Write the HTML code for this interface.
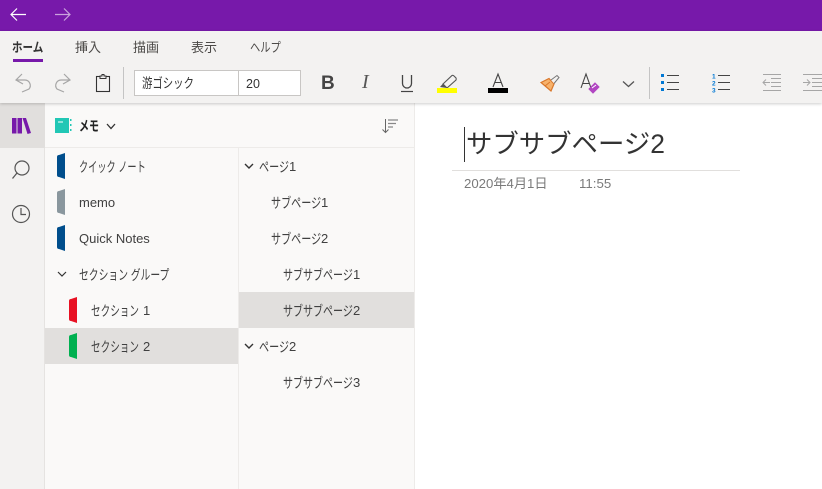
<!DOCTYPE html>
<html><head><meta charset="utf-8">
<style>
*{box-sizing:border-box}
html,body{margin:0;padding:0;width:822px;height:489px;overflow:hidden;background:#fff}
body{position:relative;font-family:"Liberation Sans","Noto Sans CJK JP",sans-serif;color:#262626}
.a{position:absolute;white-space:nowrap;transform-origin:left center}
.m{color:#404040;font-size:14px;line-height:18px;margin-top:1px}
.d{color:#404040;font-size:13px;line-height:18px}
svg{position:absolute;overflow:visible}
.tab{position:absolute;top:39px;font-size:13px;line-height:18px;color:#4c4a48;white-space:nowrap;transform-origin:left center}
</style></head><body>
<div class="a" style="left:0;top:0;width:822px;height:31px;background:#7719aa"></div>
<svg style="left:0;top:0" width="80" height="31" fill="none" stroke-width="1.2"><path d="M11 14.5H26M17 8.500L11 14.500L17 20.500" stroke="#fff"/><path d="M55 14.5H70M64 8.500L70 14.500L64 20.500" stroke="#c9a3dd"/></svg>
<div class="a" style="left:0;top:31px;width:822px;height:72px;background:#f3f2f1;box-shadow:0 1px 3px rgba(0,0,0,.2);z-index:3"></div>
<div style="position:absolute;left:0;top:0;width:822px;height:110px;z-index:4">
<div class="tab" style="left:12px;font-weight:bold;color:#333;transform:scaleX(.81)">ホーム</div>
<div class="a" style="left:13px;top:59px;width:30px;height:3px;background:#7719aa"></div>
<div class="tab" style="left:75px">挿入</div>
<div class="tab" style="left:133px">描画</div>
<div class="tab" style="left:191px">表示</div>
<div class="tab" style="left:250px;transform:scaleX(.79)">ヘルプ</div>
<svg style="left:0;top:0" width="822" height="110" fill="none">
<path d="M22 74L16 80L23 84M16 80H25A5.500 5.500 0 0 1 29 89L22 92" stroke="#a6a6a6" stroke-width="1.200"/>
<path d="M64 74L70 80L63 84M70 80H61A5.500 5.500 0 0 0 57 89L64 92" stroke="#a6a6a6" stroke-width="1.200"/>
<rect x="96.500" y="76.500" width="13" height="15" stroke="#333" stroke-width="1.100"/>
<path d="M100 78.500V76H102V74.500H104V76H106V78.500Z" fill="#f3f2f1" stroke="#333"/>
<path d="M123.500 67V99" stroke="#c4c4c4"/>
<path d="M401 91.500H413" stroke="#444" stroke-width="1.200"/>
<path d="M402.500 75V83.500A4.500 4.500 0 0 0 411.500 83.500V75" stroke="#444" stroke-width="1.300"/>
<path d="M443 84L452 75.500Q453 75 454 76L456 78Q456.500 79 456 80L447 88Z" fill="#f3f2f1" stroke="#555" stroke-width="1.100"/>
<path d="M440 87L443 83.500L447 88Z" fill="#555"/>
<rect x="437" y="88" width="20" height="5" fill="#ff0"/>
<rect x="488" y="88" width="20" height="5" fill="#000"/>
<path d="M493 87L498 74L503 87M494.500 82.500H501.500" stroke="#444" stroke-width="1.100"/>
<path d="M541 82.500L549 78.500L554 84L551 91Z" fill="#f7b26b" stroke="#d9772b" stroke-width="1.200"/>
<path d="M545 86L550 82" stroke="#d9772b"/>
<path d="M551 80L557 75.500L559 77.500L554 83.500" fill="#f3f2f1" stroke="#777"/>
<path d="M581 88L586 74L591 88M582.500 83.500H589.500" stroke="#444" stroke-width="1.100"/>
<path d="M589 89L595 83L599 87L593 93Z" fill="#b146c2" stroke="#b146c2"/>
<path d="M592 88L596 85" stroke="#fff"/>
<path d="M623 81.500L628.500 86.500L634 81.500" stroke="#555" stroke-width="1.300"/>
<path d="M649.500 67V99" stroke="#c4c4c4"/>
<path d="M661 75.500H664M661 82.500H664M661 89.500H664" stroke="#0078d4" stroke-width="3"/>
<path d="M667 75.500H679M667 82.500H679M667 89.500H679" stroke="#444"/>
<text x="712" y="78.500" font-size="6.500" font-weight="bold" fill="#0078d4">1</text>
<text x="712" y="85.500" font-size="6.500" font-weight="bold" fill="#0078d4">2</text>
<text x="712" y="92.500" font-size="6.500" font-weight="bold" fill="#0078d4">3</text>
<path d="M718 75.500H730M718 82.500H730M718 89.500H730" stroke="#444"/>
<path d="M763 74.500H781M771 78.500H781M771 82.500H781M771 86.500H781M763 90.500H781" stroke="#a6a6a6"/>
<path d="M763 82.500H770M766 79.500L763 82.500L766 85.500" stroke="#a6a6a6"/>
<path d="M803 74.500H822M812 78.500H822M812 82.500H822M812 86.500H822M803 90.500H822" stroke="#a6a6a6"/>
<path d="M803 82.500H810M807 79.500L810 82.500L807 85.500" stroke="#a6a6a6"/>
</svg>
<div class="a" style="left:134px;top:70px;width:167px;height:26px;background:#fff;border:1px solid #c8c6c4"></div>
<div class="a" style="left:238px;top:70px;width:1px;height:26px;background:#c8c6c4"></div>
<div class="a" style="left:142px;top:75px;font-size:13.500px;line-height:18px;color:#333;transform:scaleX(.77)">游ゴシック</div>
<div class="a" style="left:246px;top:75px;font-size:12.500px;line-height:18px;color:#333">20</div>
<div class="a" style="left:321px;top:72px;font-size:19px;line-height:23px;font-weight:bold;color:#444">B</div>
<div class="a" style="left:362px;top:71px;font-size:20px;line-height:23px;font-style:italic;font-family:'Liberation Serif',serif;color:#555">I</div>
</div>
<div class="a" style="left:0;top:103px;width:45px;height:386px;background:#f3f2f1;border-right:1px solid #e5e3e1"></div>
<div class="a" style="left:0;top:103px;width:45px;height:45px;background:#e1dfdd"></div>
<div class="a" style="left:45px;top:103px;width:370px;height:386px;background:#faf9f8;border-right:1px solid #edebe9"></div>
<div class="a" style="left:45px;top:147px;width:369px;height:1px;background:#edebe9"></div>
<div class="a" style="left:238px;top:148px;width:1px;height:341px;background:#edebe9"></div>
<div class="a" style="left:45px;top:328px;width:193px;height:36px;background:#e1dfdd"></div>
<div class="a" style="left:239px;top:292px;width:175px;height:36px;background:#e1dfdd"></div>
<svg style="left:0;top:100px" width="420" height="290" fill="none">
<path d="M12 18H16.500V33.500H12ZM17.500 18H22V33.500H17.500Z" fill="#7719aa"/><path d="M22.500 18H26L31 33L27.500 34Z" fill="#7719aa"/>
<circle cx="22" cy="68" r="7" stroke="#555" stroke-width="1.200"/><path d="M17 73L12.500 78.500" stroke="#555" stroke-width="1.300"/>
<circle cx="21" cy="114" r="8.500" stroke="#555" stroke-width="1.200"/><path d="M21 108V114.500H26" stroke="#555" stroke-width="1.200"/>
<path d="M55 18H69V33H55Z" fill="#22c7b5"/><path d="M58 22H63" stroke="#fff"/><path d="M70 20H71.500M70 25H71.500M70 30H71.500" stroke="#22c7b5" stroke-width="2"/>
<path d="M107 24L111 28.500L115 24" stroke="#333" stroke-width="1.300"/>
<path d="M385.500 19V32.500M382.500 29.500L385.500 32.500L388.500 29.500" stroke="#666"/><path d="M388 20H398M388 23.500H396M388 27H393" stroke="#888" stroke-width="1.200"/>
<path d="M65 53V79L59 77Q57 77 57 75V57Q57 55 59 55Z" fill="#004e8c"/>
<path d="M65 89V115L59 113Q57 113 57 111V93Q57 91 59 91Z" fill="#8a979e"/>
<path d="M65 125V151L59 149Q57 149 57 147V129Q57 127 59 127Z" fill="#004e8c"/>
<path d="M77 197V223L71 221Q69 221 69 219V201Q69 199 71 199Z" fill="#e81123"/>
<path d="M77 233V259L71 257Q69 257 69 255V237Q69 235 71 235Z" fill="#00b050"/>
<path d="M58 172L62 176L66 172" stroke="#333" stroke-width="1.200"/>
<path d="M245 64L249 68L253 64M245 244L249 248L253 244" stroke="#333" stroke-width="1.400"/>
</svg>
<div class="a" style="left:79px;top:117px;font-size:14px;line-height:18px;font-weight:bold;color:#222;transform:scaleX(.715)">メモ</div>
<div class="a m" style="left:79px;top:157px;transform:scaleX(.655)">クイック ノート</div>
<div class="a d" style="left:79px;top:194px">memo</div>
<div class="a d" style="left:79px;top:230px">Quick Notes</div>
<div class="a m" style="left:79px;top:265px;transform:scaleX(.7)">セクション グループ</div>
<div class="a m" style="left:91px;top:301px;transform:scaleX(.686)">セクション</div><div class="a d" style="left:143px;top:302px">1</div>
<div class="a m" style="left:91px;top:337px;transform:scaleX(.686)">セクション</div><div class="a d" style="left:143px;top:338px">2</div>
<div class="a m" style="left:259px;top:157px;transform:scaleX(.72)">ページ</div><div class="a d" style="left:289px;top:158px">1</div>
<div class="a m" style="left:271px;top:193px;transform:scaleX(.72)">サブページ</div><div class="a d" style="left:321px;top:194px">1</div>
<div class="a m" style="left:271px;top:229px;transform:scaleX(.72)">サブページ</div><div class="a d" style="left:321px;top:230px">2</div>
<div class="a m" style="left:283px;top:265px;transform:scaleX(.715)">サブサブページ</div><div class="a d" style="left:353px;top:266px">1</div>
<div class="a m" style="left:283px;top:301px;transform:scaleX(.715)">サブサブページ</div><div class="a d" style="left:353px;top:302px">2</div>
<div class="a m" style="left:259px;top:337px;transform:scaleX(.72)">ページ</div><div class="a d" style="left:289px;top:338px">2</div>
<div class="a m" style="left:283px;top:373px;transform:scaleX(.715)">サブサブページ</div><div class="a d" style="left:353px;top:374px">3</div>
<div class="a" style="left:464px;top:127px;width:1px;height:35px;background:#333"></div>
<div class="a" style="left:466px;top:127px;font-size:26.400px;line-height:34px;color:#333">サブサブページ2</div>
<div class="a" style="left:452px;top:170px;width:288px;height:1px;background:#e1dfdd"></div>
<div class="a" style="left:464px;top:175px;font-size:13.200px;line-height:17px;color:#7a7a7a">2020年4月1日</div>
<div class="a" style="left:579px;top:175px;font-size:13.300px;line-height:17px;color:#7a7a7a">11:55</div>
</body></html>
